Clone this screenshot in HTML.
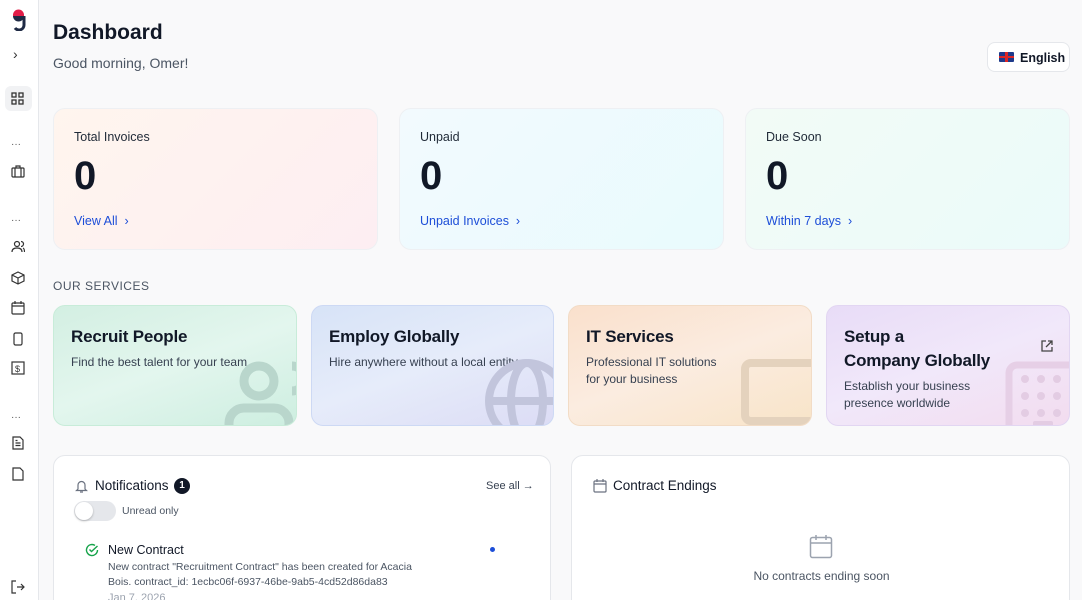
<!DOCTYPE html>
<html><head><meta charset="utf-8"><style>
*{box-sizing:border-box;margin:0;padding:0}
html,body{width:1082px;height:600px;overflow:hidden}
body{background:#f9f9fa;font-family:"Liberation Sans",sans-serif;color:#111827;position:relative}
.sb{position:absolute;left:0;top:0;width:39px;height:600px;background:#fff;border-right:1px solid #e5e7eb}
.sb svg{position:absolute;left:11px}
.dots{position:absolute;left:11px;font-size:10px;color:#555}
.abs{position:absolute}
h1{position:absolute;left:53px;top:21px;font-size:21px;font-weight:bold}
.greet{position:absolute;left:53px;top:55px;font-size:14px;color:#4b5563}
.lang{position:absolute;left:987px;top:42px;width:83px;height:30px;border:1px solid #e5e7eb;border-radius:8px;background:#fff;font-size:12.5px;font-weight:bold;padding:8px 0 0 32px}
.stat{position:absolute;top:108px;width:325px;height:142px;border-radius:12px;border:1px solid #eef0f3;padding:21px 20px}
.stat .l{font-size:12.5px;color:#1f2937}
.stat .n{font-size:40px;font-weight:bold;margin-top:10px;line-height:44px}
.stat .a{font-size:12.5px;color:#1d4ed8;margin-top:16px}
.os{position:absolute;left:53px;top:279px;font-size:12px;color:#4b5563;letter-spacing:.5px}
.svc{position:absolute;top:305px;height:121px;border-radius:12px;padding:19px 17px;overflow:hidden}
.svc .t{font-size:17px;font-weight:bold;line-height:24px;letter-spacing:-.2px}
.svc .d{font-size:12px;color:#374151;margin-top:5px;line-height:17px}
.card{position:absolute;top:455px;height:160px;background:#fff;border:1px solid #e5e7eb;border-radius:12px}
</style></head><body>
<div class="sb">
 <div class="abs" style="left:12px;top:9px;width:14px;height:22px">
  <svg style="left:0;top:0" width="14" height="22" viewBox="0 0 14 22"><path d="M1 6a5.5 5.5 0 0 1 11 0v1H1z" fill="#e11d48"/><path d="M12 7v9a5 5 0 0 1-9 3" fill="none" stroke="#1f2a44" stroke-width="3"/><path d="M1 7a5.5 5.5 0 0 0 11 0" fill="#1f2a44"/></svg>
 </div>
 <div class="abs" style="left:13px;top:46px;font-size:14px;color:#333">›</div>
 <div class="abs" style="left:5px;top:86px;width:27px;height:25px;background:#f1f2f4;border-radius:6px"></div>
 <svg style="top:92px" width="13" height="13" viewBox="0 0 13 13" fill="none" stroke="#333" stroke-width="1.3"><rect x="1" y="1" width="4" height="4"/><rect x="8" y="1" width="4" height="4"/><rect x="1" y="8" width="4" height="4"/><rect x="8" y="8" width="4" height="4"/></svg>
 <div class="dots" style="top:139px">···</div>
 <svg style="top:165px" width="14" height="13" viewBox="0 0 14 13" fill="none" stroke="#333" stroke-width="1.2"><rect x="1" y="3" width="12" height="9" rx="1"/><path d="M5 3V1h4v2M4 3v9M10 3v9"/></svg>
 <div class="dots" style="top:215px">···</div>
 <svg style="top:240px" width="14" height="13" viewBox="0 0 14 13" fill="none" stroke="#333" stroke-width="1.2"><circle cx="6" cy="4" r="2.5"/><path d="M1 12c0-3 2-4 5-4s5 1 5 4M10 1.5a2.5 2.5 0 0 1 0 5M12 8c1 .5 1.5 2 1.5 4"/></svg>
 <svg style="top:271px" width="14" height="14" viewBox="0 0 14 14" fill="none" stroke="#333" stroke-width="1.2"><path d="M7 1l6 3v6l-6 3-6-3V4zM1 4l6 3 6-3M7 7v6"/></svg>
 <svg style="top:301px" width="14" height="14" viewBox="0 0 14 14" fill="none" stroke="#333" stroke-width="1.2"><rect x="1" y="2" width="12" height="11" rx="1"/><path d="M1 5h12M4 0v3M10 0v3"/></svg>
 <svg style="top:332px" width="14" height="14" viewBox="0 0 14 14" fill="none" stroke="#333" stroke-width="1.2"><rect x="3" y="1" width="8" height="12" rx="1.5"/></svg>
 <svg style="top:361px" width="14" height="14" viewBox="0 0 14 14" fill="none" stroke="#333" stroke-width="1.2"><rect x="1" y="1" width="12" height="12"/><text x="4" y="11" font-size="9" fill="#333" stroke="none">$</text></svg>
 <div class="dots" style="top:412px">···</div>
 <svg style="top:436px" width="14" height="14" viewBox="0 0 14 14" fill="none" stroke="#333" stroke-width="1.2"><path d="M2 1h7l3 3v9H2zM4.5 7h5M4.5 9.5h5M4.5 4.5h2"/></svg>
 <svg style="top:467px" width="14" height="14" viewBox="0 0 14 14" fill="none" stroke="#333" stroke-width="1.2"><path d="M2 1h7l3 3v9H2z"/></svg>
 <svg style="top:580px" width="14" height="14" viewBox="0 0 14 14" fill="none" stroke="#333" stroke-width="1.2"><path d="M5 1H1v12h4M6 7h7M10 4l3 3-3 3"/></svg>
</div>

<h1>Dashboard</h1>
<div class="greet">Good morning, Omer!</div>
<div class="lang"><span class="abs" style="left:11px;top:9px;width:15px;height:10px;background:#1e3a8a;border-radius:1px"><span class="abs" style="left:6px;top:0;width:3px;height:10px;background:#dc2626"></span><span class="abs" style="left:0;top:4px;width:15px;height:2px;background:#dc2626"></span></span>English</div>

<div class="stat" style="left:53px;background:linear-gradient(135deg,#fff5ee,#fdeef2)"><div class="l">Total Invoices</div><div class="n">0</div><div class="a">View All &nbsp;›</div></div>
<div class="stat" style="left:399px;background:linear-gradient(135deg,#f2fafe,#e9fbfd)"><div class="l">Unpaid</div><div class="n">0</div><div class="a">Unpaid Invoices &nbsp;›</div></div>
<div class="stat" style="left:745px;background:linear-gradient(135deg,#f2fbf6,#ebfbfa)"><div class="l">Due Soon</div><div class="n">0</div><div class="a">Within 7 days &nbsp;›</div></div>

<div class="os">OUR SERVICES</div>
<div class="svc" style="left:53px;width:244px;background:linear-gradient(160deg,#d3efe2,#e3f6ee 50%,#cdeee0);border:1px solid #c8ecd9"><div class="t">Recruit People</div><div class="d">Find the best talent for your team</div>
 <svg class="abs" style="left:170px;top:55px" width="80" height="70" fill="none" stroke="#b9d6cc" stroke-width="9"><circle cx="35" cy="20" r="15"/><path d="M68 5a12 12 0 0 1 0 25"/><path d="M5 70v-8a15 15 0 0 1 15-15h30a15 15 0 0 1 15 15v8"/></svg></div>
<div class="svc" style="left:311px;width:243px;background:linear-gradient(160deg,#d7e3f7,#e6ecfa 50%,#dcdcf5);border:1px solid #cdd9f4"><div class="t">Employ Globally</div><div class="d">Hire anywhere without a local entity</div>
 <svg class="abs" style="left:170px;top:50px" width="80" height="80" fill="none" stroke="#c2c5dc" stroke-width="8"><circle cx="45" cy="45" r="38"/><ellipse cx="45" cy="45" rx="16" ry="38"/><path d="M7 45h76"/></svg></div>
<div class="svc" style="left:568px;width:244px;background:linear-gradient(160deg,#fae0cc,#fbece0 50%,#f8e4c8);border:1px solid #f2dcc6"><div class="t">IT Services</div><div class="d">Professional IT solutions<br>for your business</div>
 <svg class="abs" style="left:172px;top:53px" width="80" height="80" fill="none" stroke="#e4d2bd" stroke-width="8"><rect x="4" y="4" width="80" height="58" rx="6"/><path d="M40 62v16"/></svg></div>
<div class="svc" style="left:826px;width:244px;background:linear-gradient(160deg,#e8dcf7,#f1e8fa 50%,#f2dcef);border:1px solid #e2d6f2"><div class="t">Setup a<br>Company Globally</div><div class="d">Establish your business<br>presence worldwide</div>
 <svg class="abs" style="left:213px;top:33px" width="14" height="14" fill="none" stroke="#444" stroke-width="1.3"><path d="M6 2H2v10h10V8M8 2h4v4M12 2L6 8"/></svg>
 <svg class="abs" style="left:178px;top:55px" width="70" height="70"><rect x="4" y="4" width="70" height="80" rx="8" fill="none" stroke="#e6cfe6" stroke-width="7"/><g fill="#e3cce3"><circle cx="20" cy="18" r="4"/><circle cx="36" cy="18" r="4"/><circle cx="52" cy="18" r="4"/><circle cx="20" cy="35" r="4"/><circle cx="36" cy="35" r="4"/><circle cx="52" cy="35" r="4"/><circle cx="20" cy="52" r="4"/><circle cx="36" cy="52" r="4"/><circle cx="52" cy="52" r="4"/><rect x="28" y="60" width="20" height="10" rx="2"/></g></svg></div>

<div class="card" style="left:53px;width:498px">
 <svg class="abs" style="left:21px;top:23px" width="13" height="14" fill="none" stroke="#6b7280" stroke-width="1.2"><path d="M3 10V6a3.5 3.5 0 0 1 7 0v4l1.5 1.5h-10zM5 13h3"/></svg>
 <div class="abs" style="left:41px;top:22px;font-size:13.5px">Notifications</div>
 <div class="abs" style="left:120px;top:22px;width:16px;height:16px;border-radius:8px;background:#111827;color:#fff;font-size:10px;text-align:center;line-height:16px;font-weight:bold">1</div>
 <div class="abs" style="left:432px;top:24px;font-size:11px;color:#374151">See all →</div>
 <div class="abs" style="left:20px;top:45px;width:42px;height:20px;border-radius:10px;background:#e5e7eb"><div class="abs" style="left:1px;top:1px;width:18px;height:18px;border-radius:9px;background:#fff;box-shadow:0 1px 2px rgba(0,0,0,.25)"></div></div>
 <div class="abs" style="left:68px;top:49px;font-size:10.5px;color:#4b5563">Unread only</div>
 <svg class="abs" style="left:31px;top:87px" width="14" height="14" fill="none" stroke="#16a34a" stroke-width="1.4"><path d="M12.5 7A5.5 5.5 0 1 1 10 2.4"/><path d="M4.5 6.5l2 2L12.5 3"/></svg>
 <div class="abs" style="left:54px;top:87px;font-size:12.5px">New Contract</div>
 <div class="abs" style="left:436px;top:91px;width:5px;height:5px;border-radius:3px;background:#1d4ed8"></div>
 <div class="abs" style="left:54px;top:104px;font-size:10.5px;color:#4b5563;line-height:15px">New contract "Recruitment Contract" has been created for Acacia<br>Bois. contract_id: 1ecbc06f-6937-46be-9ab5-4cd52d86da83</div>
 <div class="abs" style="left:54px;top:136px;font-size:11px;color:#9ca3af">Jan 7, 2026</div>
</div>
<div class="card" style="left:571px;width:499px">
 <svg class="abs" style="left:21px;top:23px" width="14" height="14" fill="none" stroke="#6b7280" stroke-width="1.2"><rect x="1" y="2" width="12" height="11" rx="1"/><path d="M1 5h12M4 0v3M10 0v3"/></svg>
 <div class="abs" style="left:41px;top:22px;font-size:13.5px">Contract Endings</div>
 <svg class="abs" style="left:237px;top:78px" width="24" height="25" fill="none" stroke="#9ca3af" stroke-width="1.5"><rect x="1.5" y="3.5" width="21" height="20" rx="2"/><path d="M1.5 9h21M7 1v5M17 1v5"/></svg>
 <div class="abs" style="left:0;width:499px;top:113px;text-align:center;font-size:12px;color:#4b5563">No contracts ending soon</div>
</div>
</body></html>
